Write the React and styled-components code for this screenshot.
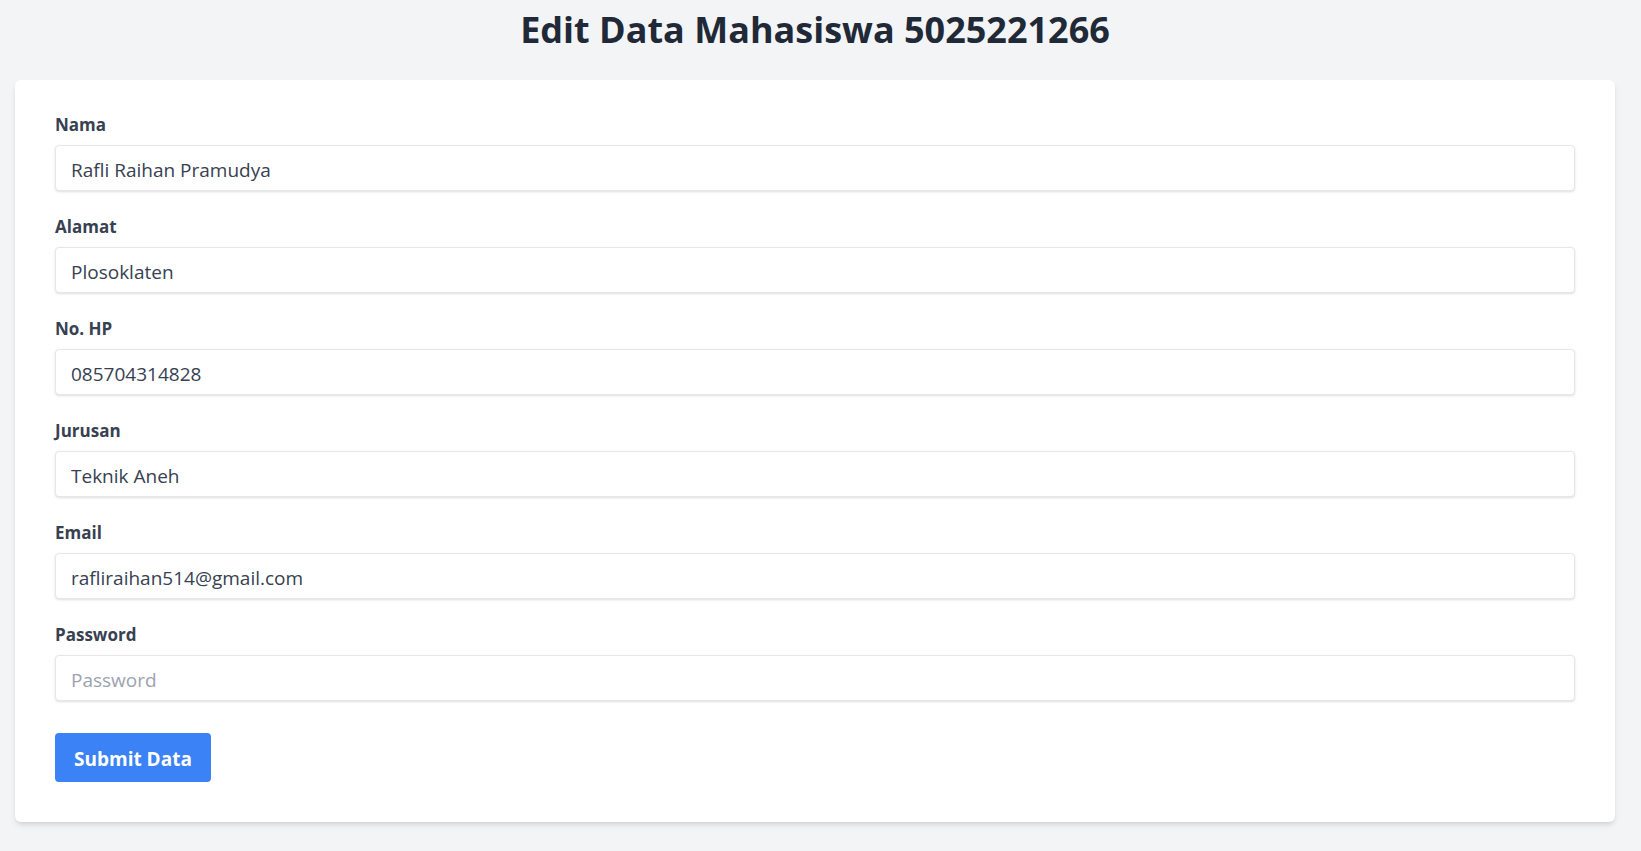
import React from 'react'
import styled, { createGlobalStyle } from 'styled-components'

const GlobalStyle = createGlobalStyle`
  * { box-sizing: border-box; }
  html, body {
    margin: 0;
    padding: 0;
    background: #f3f4f6;
    font-family: "Segoe UI", "Open Sans", "Noto Sans", sans-serif;
  }
`

const Page = styled.div`
  min-height: 851px;
  padding: 10px 26px 20px 15px;
`

const Title = styled.h1`
  margin: 0 0 30px;
  text-align: center;
  font-size: 36px;
  line-height: 40px;
  font-weight: 700;
  color: #1f2937;
`

const Card = styled.form`
  background: #fff;
  border-radius: 6px;
  box-shadow: 0 4px 6px -1px rgba(0, 0, 0, 0.1), 0 2px 4px -2px rgba(0, 0, 0, 0.1);
  padding: 29px 40px 40px;
`

const Field = styled.div`
  margin-bottom: 20px;
`

const Label = styled.label`
  display: block;
  padding-top: 2px;
  margin-bottom: 6px;
  font-size: 17px;
  line-height: 28px;
  font-weight: 700;
  color: #374151;
`

const Input = styled.input`
  display: block;
  width: 100%;
  height: 46px;
  padding: 10px 15px 6px;
  font-family: inherit;
  font-size: 19px;
  line-height: 28px;
  color: #374151;
  background: #fff;
  border: 1px solid #e5e7eb;
  border-radius: 4px;
  box-shadow: 0 1px 3px 0 rgba(0, 0, 0, 0.1), 0 1px 2px -1px rgba(0, 0, 0, 0.1);
  outline: none;

  &::placeholder {
    color: #9ca3af;
  }
`

const SubmitButton = styled.button`
  margin-top: 12px;
  height: 49px;
  padding: 3px 19px 0;
  font-family: inherit;
  font-size: 19px;
  font-weight: 700;
  color: #fff;
  background: #3b82f6;
  border: none;
  border-radius: 4px;
  cursor: pointer;
`

const fields = [
  { label: 'Nama', value: 'Rafli Raihan Pramudya' },
  { label: 'Alamat', value: 'Plosoklaten' },
  { label: 'No. HP', value: '085704314828' },
  { label: 'Jurusan', value: 'Teknik Aneh' },
  { label: 'Email', value: 'rafliraihan514@gmail.com' },
  { label: 'Password', value: '', placeholder: 'Password', type: 'password' },
]

export default function App() {
  return (
    <>
      <GlobalStyle />
      <Page>
        <Title>Edit Data Mahasiswa 5025221266</Title>
        <Card onSubmit={e => e.preventDefault()}>
          {fields.map(f => (
            <Field key={f.label}>
              <Label>{f.label}</Label>
              <Input
                type={f.type || 'text'}
                defaultValue={f.value}
                placeholder={f.placeholder}
              />
            </Field>
          ))}
          <SubmitButton type="submit">Submit Data</SubmitButton>
        </Card>
      </Page>
    </>
  )
}
